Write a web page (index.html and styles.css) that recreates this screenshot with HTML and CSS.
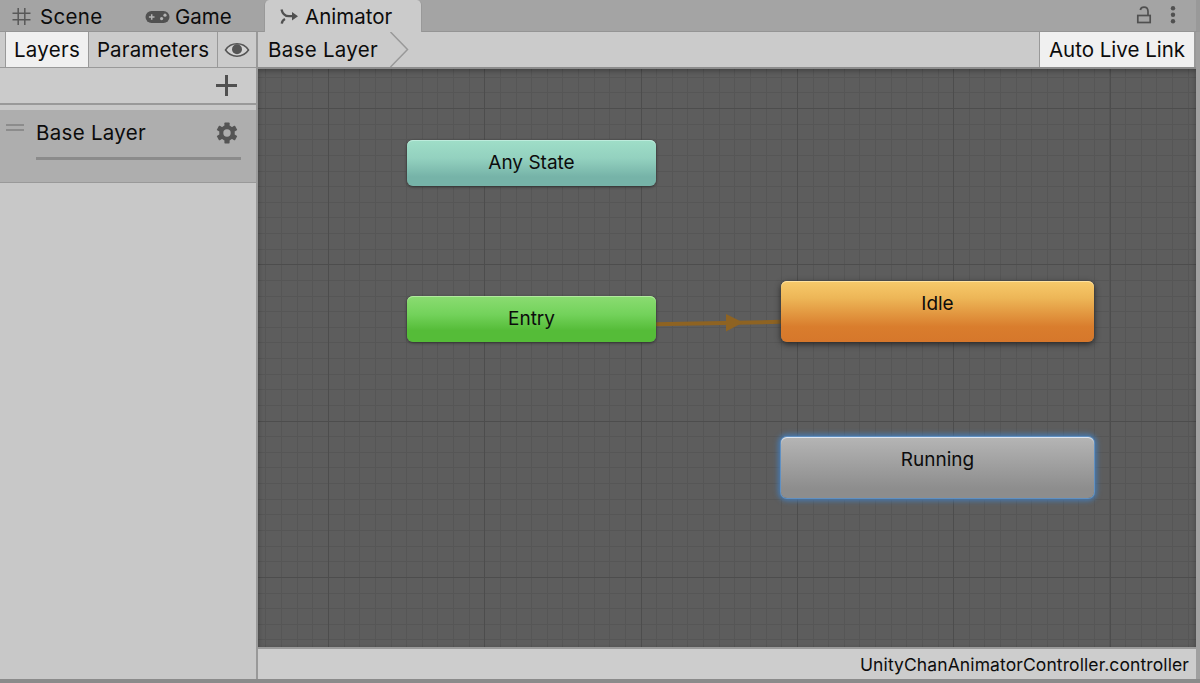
FILE: index.html
```html
<!DOCTYPE html>
<html lang="en">
<head>
<meta charset="utf-8">
<title>Animator</title>
<link rel="stylesheet" href="styles.css">
</head>
<body>
<div class="window">
  <header class="tabs">
    <div class="tab tab-scene">
      <svg width="20" height="20" viewBox="0 0 20 20" fill="none" stroke="#585858" stroke-width="1.5"><path d="M6.2 1v17M12.800 1v17M.5 6.200h18M.5 12.800h18"/></svg>
      <span>Scene</span>
    </div>
    <div class="tab tab-game">
      <svg width="25" height="14" viewBox="0 0 25 14"><rect x=".5" y="1" width="24" height="12" rx="6" fill="#515151"/><path d="M6.700 4.200v5.600M3.900 7h5.600" stroke="#b4b4b4" stroke-width="1.500"/><circle cx="16.600" cy="8.600" r="1.600" fill="#b4b4b4"/><circle cx="20" cy="5.200" r="1.600" fill="#b4b4b4"/></svg>
      <span>Game</span>
    </div>
    <div class="tab tab-active">
      <svg width="19" height="18" viewBox="0 0 19 18" fill="none" stroke="#505050" stroke-width="2.300"><path d="M1.500 1.500C2.500 6 5 8.200 9 8.200H14M1.800 15.700C2 13.300 3 12 5 11"/><path d="M12 4 18 8.200 12 12.400z" fill="#505050" stroke="none"/></svg>
      <span>Animator</span>
    </div>
    <div class="window-tools">
      <svg width="16" height="20" viewBox="0 0 16 20" fill="none" stroke="#505050" stroke-width="1.700"><rect x="1.800" y="10.500" width="12.400" height="7"/><path d="M12 10V6.500C12 3.600 10.300 2.200 8 2.200c-2 0-3.300 1-3.700 2.800"/></svg>
      <svg width="6" height="20" viewBox="0 0 6 20" fill="#505050"><circle cx="3" cy="3.300" r="2.200"/><circle cx="3" cy="9.800" r="2.200"/><circle cx="3" cy="16.300" r="2.200"/></svg>
    </div>
  </header>
  <div class="main">
    <aside class="sidebar">
      <div class="side-tabs">
        <div class="side-tab side-tab-on"><span>Layers</span></div>
        <div class="side-tab side-params"><span>Parameters</span></div>
        <div class="side-tab side-eye">
          <svg width="26" height="18" viewBox="0 0 26 18"><path d="M1.500 9C7 .8 19 .8 24.500 9 19 17.200 7 17.200 1.500 9z" fill="#d2d2d2" stroke="#555" stroke-width="1.500"/><circle cx="13" cy="8.300" r="5" fill="#555"/></svg>
        </div>
      </div>
      <div class="add-row">
        <svg width="21" height="21" viewBox="0 0 21 21" stroke="#505050" stroke-width="3"><path d="M10.500 0v21M0 10.500h21"/></svg>
      </div>
      <div class="layer">
        <div class="handle"></div>
        <div class="layer-body">
          <div class="layer-head">
            <span>Base Layer</span>
            <svg width="22" height="22" viewBox="-11 -11 22 22"><g fill="#555"><rect x="-2.600" y="-10.500" width="5.200" height="21" rx=".7"/><rect x="-2.600" y="-10.500" width="5.200" height="21" rx=".7" transform="rotate(60)"/><rect x="-2.600" y="-10.500" width="5.200" height="21" rx=".7" transform="rotate(120)"/><circle r="7.800"/></g><circle r="3.700" fill="#aeaeae"/></svg>
          </div>
          <div class="weight"></div>
        </div>
      </div>
    </aside>
    <section class="graph">
      <div class="crumbs">
        <span class="crumb">Base Layer</span>
        <svg width="20" height="35" viewBox="0 0 20 35" fill="none" stroke="#999" stroke-width="1.500"><path d="M1.500 0 18.500 17.500 1.500 35"/></svg>
        <div class="live"><span>Auto Live Link</span></div>
      </div>
      <div class="canvas">
        <svg class="link" width="126" height="20" viewBox="0 0 126 20"><path d="M0 11.300 126 8.800" stroke="#8e6322" stroke-width="4"/><path d="M71 1 88 9.500 71 18.500z" fill="#8e6322"/></svg>
        <div class="node any"><span>Any State</span></div>
        <div class="node entry"><span>Entry</span></div>
        <div class="node idle"><span>Idle</span></div>
        <div class="node running"><span>Running</span></div>
      </div>
      <footer class="status"><span>UnityChanAnimatorController.controller</span></footer>
    </section>
  </div>
</div>
</body>
</html>
```
FILE: styles.css
```css
* { box-sizing: border-box; }
body {
  margin: 0;
  overflow: hidden;
  font: 20.5px/24px Inter, "Liberation Sans", sans-serif;
  letter-spacing: 0.3px;
  color: #0c0c0c;
}
svg { display: block; flex: none; }
span { white-space: nowrap; }
.window {
  display: flex;
  flex-direction: column;
  width: 1200px;
  height: 683px;
  padding-bottom: 4px;
  background: #8b8b8b;
}
.tabs {
  display: flex;
  flex: none;
  height: 32px;
  background: #a4a4a4;
  border-bottom: 1px solid #949494;
  border-right: 4px solid #999;
}
.tab { display: flex; align-items: center; height: 32px; padding-top: 2px; }
.tab-scene { gap: 8px; padding-left: 12px; width: 145px; }
.tab-game { gap: 5px; width: 119px; letter-spacing: 0; }
.tab-active {
  gap: 6px;
  width: 158px;
  padding-left: 15px;
  background: #cbcbcb;
  border: 1px solid #999;
  border-width: 0 1px;
  border-radius: 5px 5px 0 0;
  letter-spacing: 0;
}
.window-tools { display: flex; gap: 18px; margin-left: auto; padding: 5px 20px 0 0; }
.main { display: flex; flex: 1; min-height: 0; border-right: 4px solid #a0a0a0; }
.sidebar {
  width: 258px;
  background: #c8c8c8;
  border-right: 2px solid #999;
}
.side-tabs {
  display: flex;
  height: 36px;
  padding-left: 5px;
  background: #cbcbcb;
  border-bottom: 1px solid #999;
}
.side-tab {
  display: flex;
  align-items: center;
  justify-content: center;
  border-left: 1px solid #999;
}
.side-tab-on { width: 83px; background: #f0f0f0; }
.side-params { width: 129px; letter-spacing: 0.15px; }
.side-eye { flex: 1; }
.add-row {
  display: flex;
  align-items: center;
  justify-content: flex-end;
  height: 37px;
  padding-right: 19px;
  background: #cbcbcb;
  border-bottom: 2px solid #999;
}
.layer {
  display: flex;
  height: 73px;
  margin-top: 5px;
  background: #aeaeae;
  border-bottom: 1px solid #999;
}
.handle {
  width: 18px;
  height: 7px;
  margin: 14px 12px 0 6px;
  border: solid #8c8c8c;
  border-width: 2px 0;
}
.layer-body { width: 205px; padding-top: 11px; }
.layer-head { display: flex; align-items: center; justify-content: space-between; padding-right: 3px; }
.weight { height: 3px; margin-top: 12px; background: #8b8b8b; }
.graph { display: flex; flex: 1; flex-direction: column; min-width: 0; background: #cdcdcd; }
.crumbs {
  display: flex;
  align-items: center;
  height: 37px;
  padding-left: 10px;
  background: #cbcbcb;
  border-bottom: 2px solid #8c8c8c;
}
.crumb { width: 121px; }
.live {
  display: flex;
  align-items: center;
  justify-content: center;
  width: 157px;
  height: 35px;
  margin-left: auto;
  background: #f0f0f0;
  border: solid #999;
  border-width: 0 2px 0 1px;
  letter-spacing: 0;
}
.canvas {
  position: relative;
  height: 578px;
  background:
    repeating-linear-gradient(90deg, transparent 0 70px, #4d4d4d 70px 71px, transparent 71px 156.3px),
    repeating-linear-gradient(180deg, transparent 0 39px, #4d4d4d 39px 40px, transparent 40px 156.3px),
    repeating-linear-gradient(90deg, transparent 0 7.48px, #565656 7.48px 8.48px, transparent 8.48px 15.63px),
    repeating-linear-gradient(180deg, transparent 0 7.74px, #565656 7.74px 8.74px, transparent 8.74px 15.63px),
    #5d5d5d;
  box-shadow: inset 0 2px 5px rgba(0, 0, 0, 0.3);
}
.node {
  position: absolute;
  display: flex;
  justify-content: center;
  padding-top: 10px;
  border-radius: 6px;
  font-size: 19px;
  letter-spacing: 0;
}
.any, .entry { left: 149px; width: 249px; height: 46px; padding-top: 11px; }
.any {
  top: 71px;
  background: linear-gradient(#9fdec8, #93d1bf 40%, #76b3a8 80%, #76b3a8);
  box-shadow: inset 0 1px #bdebdc, 0 1px 3px #2f2f2f;
}
.entry {
  top: 227px;
  background: linear-gradient(#8bdc72, #73d25b 40%, #55bc38 75%, #55bc38);
  box-shadow: inset 0 1px #b2eb9f, 0 1px 3px #2f2f2f;
}
.idle, .running { left: 523px; width: 313px; height: 61px; padding-top: 11px; }
.idle {
  top: 212px;
  background: linear-gradient(#f7ca6b, #edb657 28%, #d97d2d 75%, #d6772b);
  box-shadow: inset 0 1px #ffe2a0, 0 2px 6px #252525;
}
.running {
  top: 368px;
  background: linear-gradient(#b5b5b5, #8d8d8d 85%);
  box-shadow: inset 0 1px #dce6f2, 0 0 0 1px #6090c2, 0 0 5px 3px #4779ae;
}
.link { position: absolute; left: 397px; top: 244px; }
.status {
  display: flex;
  flex: 1;
  align-items: center;
  justify-content: flex-end;
  padding: 1px 7px 0 0;
  border-top: 2px solid #9b9b9b;
  font-size: 17.5px;
  letter-spacing: 0.1px;
}
```
